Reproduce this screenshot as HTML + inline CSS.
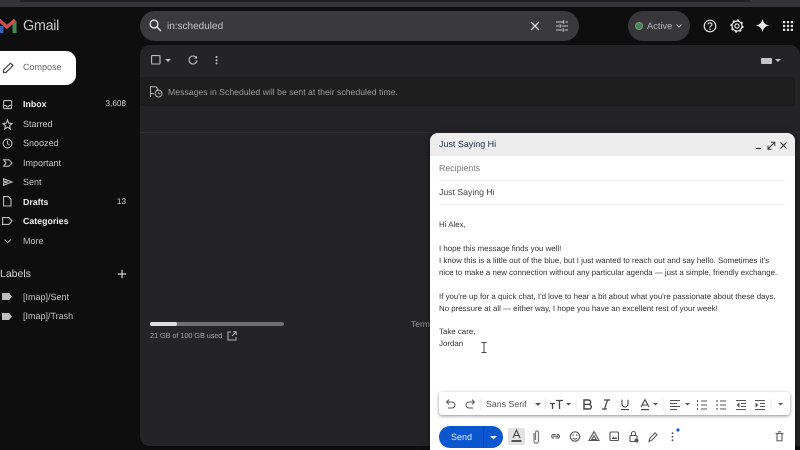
<!DOCTYPE html>
<html><head><meta charset="utf-8"><style>
*{box-sizing:border-box}
html,body{margin:0;padding:0}
body{width:800px;height:450px;overflow:hidden;background:#0e0e0f;position:relative;font-family:"Liberation Sans",sans-serif;text-rendering:geometricPrecision}
#w{position:absolute;left:0;top:0;width:800px;height:450px;filter:blur(.3px)}
.t{position:absolute;white-space:nowrap;line-height:12px;font-size:9.2px}
.a{position:absolute}
svg{position:absolute;overflow:visible;fill:none}
.n{color:#c4c4c6;font-size:9px;left:23px}
.b{color:#f0f0f0;font-weight:bold;font-size:8.8px}
.m{color:#333;font-size:7.9px;left:439px}
.ic{stroke:#bdbdbf;stroke-width:1.1}
.tb{stroke:#555;stroke-width:1}
</style></head><body><div id="w">
<div class="a" style="left:0;top:0;width:800px;height:7px;background:#343437"></div>
<div class="a" style="left:20px;top:0;width:730px;height:2px;background:#202022"></div>

<svg style="left:0;top:19px" width="17" height="14" viewBox="0 0 17 14">
<rect x="0" y="7" width="3.5" height="7" fill="#2f62b8"/>
<rect x="12.5" y="2" width="4" height="12" fill="#3f8a55"/>
<path d="M-1 1L7 8L15 1" stroke="#c9524a" stroke-width="3.4"/>
</svg>
<div class="t" style="left:23px;top:17px;font-size:14.4px;letter-spacing:-.3px;line-height:18px;color:#c9c9cb">Gmail</div>

<div class="a" style="left:-10px;top:51px;width:86px;height:34px;background:#fff;border-radius:10px"></div>
<svg style="left:2px;top:62px" width="12" height="12" viewBox="0 0 12 12"><path d="M1.5 10.5V8L8.5 1.2L11 3.5L4 10.5Z" stroke="#444" stroke-width="1.2"/></svg>
<div class="t" style="left:23px;top:61px;font-size:9px;color:#666">Compose</div>

<!-- sidebar icons -->
<svg style="left:3px;top:100px" width="10" height="10"><rect x=".6" y=".6" width="8" height="8" rx="1" class="ic"/><path d="M.6 5.5H3Q3.5 7 4.6 7T6.3 5.5H8.6" class="ic"/></svg>
<svg style="left:2px;top:119px" width="11" height="11" viewBox="0 0 11 11"><path d="M5.5 1L6.8 4.2L10 4.5L7.6 6.7L8.3 10L5.5 8.2L2.7 10L3.4 6.7L1 4.5L4.2 4.2Z" class="ic"/></svg>
<svg style="left:2px;top:138px" width="11" height="11"><circle cx="5.5" cy="5.5" r="4.4" class="ic"/><path d="M5.5 2.8V5.7L7.4 6.8" class="ic"/></svg>
<svg style="left:3px;top:159px" width="10" height="8"><path d="M.6.8H6L9 4L6 7.2H.6L3 4Z" class="ic"/></svg>
<svg style="left:3px;top:178px" width="10" height="8"><path d="M.6.8L9 4L.6 7.2V4.8L5 4L.6 3.2Z" class="ic"/></svg>
<svg style="left:3px;top:196px" width="9" height="11"><path d="M.6.6H5.4L8 3.2V10H.6Z" class="ic"/></svg>
<svg style="left:2px;top:217px" width="11" height="8"><path d="M.6.6H7L10 4L7 7.4H.6Z" class="ic"/></svg>
<svg style="left:4px;top:239px" width="8" height="5"><path d="M.6.6L3.7 3.6L6.8.6" class="ic"/></svg>
<svg style="left:2px;top:293px" width="10" height="7"><path d="M0 0H7L10 3.5L7 7H0Z" fill="#bdbdbf"/></svg>
<svg style="left:2px;top:313px" width="10" height="7"><path d="M0 0H7L10 3.5L7 7H0Z" fill="#bdbdbf"/></svg>

<div class="t n b" style="top:98px">Inbox</div><div class="t" style="left:100px;width:26px;text-align:right;top:98px;color:#d0d0d0;font-size:8.2px">3,608</div>
<div class="t n" style="top:118px">Starred</div>
<div class="t n" style="top:137px">Snoozed</div>
<div class="t n" style="top:157px">Important</div>
<div class="t n" style="top:176px">Sent</div>
<div class="t n b" style="top:196px">Drafts</div><div class="t" style="left:100px;width:26px;text-align:right;top:196px;color:#d0d0d0;font-size:8.2px">13</div>
<div class="t n b" style="top:215px">Categories</div>
<div class="t n" style="top:235px">More</div>
<div class="t" style="left:0;top:268px;font-size:10.5px;color:#d4d4d4">Labels</div>
<svg style="left:117px;top:269px" width="10" height="10"><path d="M5 .8V9.2M.8 5H9.2" stroke="#d4d4d4" stroke-width="1.2"/></svg>
<div class="t n" style="top:291px">[Imap]/Sent</div>
<div class="t n" style="top:310px">[Imap]/Trash</div>

<!-- search -->
<div class="a" style="left:140px;top:11px;width:439px;height:30px;background:#3a3a3c;border-radius:15px"></div>
<svg style="left:149px;top:19px" width="13" height="13"><circle cx="5" cy="5" r="3.9" stroke="#e0e0e0" stroke-width="1.4"/><path d="M8 8L12 12" stroke="#e0e0e0" stroke-width="1.5"/></svg>
<div class="t" style="left:167px;top:20px;font-size:10px;line-height:13px;color:#c6c6c8">in:scheduled</div>
<svg style="left:530px;top:21px" width="10" height="10"><path d="M1 1L9 9M9 1L1 9" stroke="#dcdcdc" stroke-width="1.3"/></svg>
<svg style="left:556px;top:20px" width="12" height="12"><path d="M0 2H7M9.5 2H12M0 6H3M5.5 6H12M0 10H6M8.5 10H12M7.5.2V3.8M4.2 4.2V7.8M7.2 8.2V11.8" stroke="#c6c6c8" stroke-width="1.1"/></svg>

<!-- status -->
<div class="a" style="left:628px;top:11px;width:62px;height:30px;background:#37373a;border-radius:15px"></div>
<div class="a" style="left:635px;top:22px;width:8px;height:8px;border-radius:50%;background:#3f8a55;border:1px solid #8a8f8a"></div>
<div class="t" style="left:647px;top:20px;font-size:9.3px;color:#b8b8ba">Active</div>
<svg style="left:676px;top:24px" width="6" height="4"><path d="M.5.5L3 3L5.5.5" stroke="#b8b8ba"/></svg>
<svg style="left:703px;top:19px" width="14" height="14"><circle cx="7" cy="7" r="5.8" stroke="#e4e4e4" stroke-width="1.2"/><path d="M5 5.5Q5.2 3.8 7 3.8T9 5.4Q9 6.4 7.9 7T7 8.5" stroke="#e4e4e4" stroke-width="1.1"/><circle cx="7" cy="10.2" r=".8" fill="#e4e4e4"/></svg>
<svg style="left:730px;top:19px" width="14" height="14"><circle cx="7" cy="7" r="2.1" stroke="#e4e4e4" stroke-width="1.2"/><circle cx="7" cy="7" r="5" stroke="#e4e4e4" stroke-width="1.2"/><circle cx="7" cy="7" r="5.9" stroke="#e4e4e4" stroke-width="1.4" stroke-dasharray="2 2.63"/></svg>
<svg style="left:756px;top:19px" width="13" height="13"><path d="M6.5 0Q7.5 5.5 13 6.5Q7.5 7.5 6.5 13Q5.5 7.5 0 6.5Q5.5 5.5 6.5 0Z" fill="#e8e8e8"/></svg>
<svg style="left:783px;top:21px" width="10" height="10"><g fill="#e4e4e4"><rect width="2.2" height="2.2"/><rect x="3.9" width="2.2" height="2.2"/><rect x="7.8" width="2.2" height="2.2"/><rect y="3.9" width="2.2" height="2.2"/><rect x="3.9" y="3.9" width="2.2" height="2.2"/><rect x="7.8" y="3.9" width="2.2" height="2.2"/><rect y="7.8" width="2.2" height="2.2"/><rect x="3.9" y="7.8" width="2.2" height="2.2"/><rect x="7.8" y="7.8" width="2.2" height="2.2"/></g></svg>

<!-- main panel -->
<div class="a" style="left:140px;top:45px;width:660px;height:401px;background:#242426;border-radius:10px 10px 0 10px"></div>
<div class="a" style="left:140px;top:77px;width:655px;height:29px;background:#1e1e1f;border-radius:2px"></div>
<div class="a" style="left:140px;top:132px;width:660px;height:1px;background:#303032"></div>
<svg style="left:151px;top:55px" width="10" height="10"><rect x=".6" y=".6" width="8.4" height="8.4" rx="1" stroke="#bdbdbf" stroke-width="1.1"/></svg>
<svg style="left:165px;top:59px" width="6" height="3"><path d="M0 0H6L3 3Z" fill="#bdbdbf"/></svg>
<svg style="left:188px;top:55px" width="10" height="10"><path d="M8.5 3A4 4 0 1 0 9 5.5" stroke="#bdbdbf" stroke-width="1.1"/><path d="M9 .6V3.6H6Z" fill="#bdbdbf"/></svg>
<svg style="left:215px;top:56px" width="3" height="9"><circle cx="1.5" cy="1" r="1" fill="#c4c4c6"/><circle cx="1.5" cy="4.2" r="1" fill="#c4c4c6"/><circle cx="1.5" cy="7.4" r="1" fill="#c4c4c6"/></svg>
<div class="a" style="left:761px;top:58px;width:11px;height:6px;background:#c4c4c6;border-radius:1px"></div>
<svg style="left:775px;top:59px" width="6" height="3"><path d="M0 0H6L3 3Z" fill="#c4c4c6"/></svg>
<svg style="left:150px;top:86px" width="13" height="12"><path d="M.6 11V.8H6L8 3L6 5" stroke="#b4b4b6" stroke-width="1"/><path d="M.6 7.6H4" stroke="#b4b4b6"/><circle cx="8.6" cy="7.6" r="3.4" stroke="#b4b4b6"/><path d="M8.6 5.8V7.8H10.2" stroke="#b4b4b6" stroke-width=".8"/></svg>
<div class="t" style="left:168px;top:86px;font-size:8.7px;color:#9a9a9c">Messages in Scheduled will be sent at their scheduled time.</div>

<div class="a" style="left:150px;top:322px;width:134px;height:4px;background:#707072;border-radius:2px"></div>
<div class="a" style="left:150px;top:322px;width:27px;height:4px;background:#dedede;border-radius:2px"></div>
<div class="t" style="left:150px;top:330px;font-size:7.4px;letter-spacing:-.1px;color:#a6a6a8">21 GB of 100 GB used</div>
<svg style="left:227px;top:331px" width="10" height="10"><path d="M4 1H1V9H9V6M5 5L9 1M6 .8H9.2V4" stroke="#b4b4b6" stroke-width="1"/></svg>
<div class="t" style="left:411px;top:318px;font-size:8.5px;color:#9a9a9c">Terms</div>

<!-- compose window -->
<div class="a" style="left:430px;top:133px;width:365px;height:317px;background:#fff;border-radius:8px 8px 0 0;box-shadow:0 0 6px rgba(0,0,0,.5);overflow:hidden">
<div class="a" style="left:0;top:0;width:365px;height:23px;background:#ededee"></div>
<div class="a" style="left:9px;top:47px;width:346px;height:1px;background:#eee"></div>
<div class="a" style="left:9px;top:71px;width:346px;height:1px;background:#eee"></div>
</div>
<div class="t" style="left:439px;top:138px;font-size:8.95px;color:#1f2d4a">Just Saying Hi</div>
<svg style="left:756px;top:141px" width="32" height="9"><path d="M0 7.5H5" stroke="#333" stroke-width="1.2"/><path d="M12 8L18 2M15 1.2H18.8V5M12 4.5V8.2H15.5" stroke="#333" stroke-width="1"/><path d="M24.5 1.5L30.5 7.5M30.5 1.5L24.5 7.5" stroke="#333" stroke-width="1.2"/></svg>
<div class="t" style="left:439px;top:162px;font-size:8.8px;color:#777">Recipients</div>
<div class="t" style="left:439px;top:186px;font-size:8.7px;color:#444">Just Saying Hi</div>

<div class="t m" style="top:219px">Hi Alex,</div>
<div class="t m" style="top:243px">I hope this message finds you well!</div>
<div class="t m" style="top:255px">I know this is a little out of the blue, but I just wanted to reach out and say hello. Sometimes it's</div>
<div class="t m" style="top:267px">nice to make a new connection without any particular agenda — just a simple, friendly exchange.</div>
<div class="t m" style="top:291px">If you're up for a quick chat, I'd love to hear a bit about what you're passionate about these days.</div>
<div class="t m" style="top:303px">No pressure at all — either way, I hope you have an excellent rest of your week!</div>
<div class="t m" style="top:326px">Take care,</div>
<div class="t m" style="top:338px">Jordan</div>
<svg style="left:481px;top:342px" width="6" height="11"><path d="M.5.5H5.5M.5 10.5H5.5M3 .5V10.5" stroke="#444"/></svg>

<!-- format bar -->
<div class="a" style="left:439px;top:392px;width:351px;height:23px;background:#fff;border-radius:3px;box-shadow:0 1px 3px rgba(0,0,0,.45)"></div>
<svg style="left:445px;top:399px" width="340" height="11" viewBox="445 399 340 11">
<path d="M447 402H452A3 3 0 0 1 452 408H448M449 399.6L446.6 402L449 404.4" class="tb"/>
<path d="M474 402H469A3 3 0 0 0 469 408H473M472 399.6L474.4 402L472 404.4" class="tb"/>
<path d="M481 399V410M545 399V410M576 399V410M663 399V410M771 399V410" stroke="#e4e4e4" stroke-width=".8"/>
<path d="M535 403H541L538 406Z" fill="#555"/>
<path d="M566 403H571L568.5 405.5Z" fill="#555"/>
<path d="M653 403H658L655.5 405.5Z" fill="#555"/>
<path d="M685 403H690L687.5 405.5Z" fill="#555"/>
<path d="M778 403H783L780.5 405.5Z" fill="#555"/>
<path d="M550 403.5H555M552.5 403.5V409M556 400.5H563M559.5 400.5V409" stroke="#444" stroke-width="1.3"/>
<path d="M584 400H588.5A2.2 2.2 0 0 1 588.5 404.4H584ZM584 404.4H589A2.3 2.3 0 0 1 589 409H584Z" stroke="#444" stroke-width="1.4"/>
<path d="M604 400H610M602 409H607M607.5 400L604.5 409" stroke="#444" stroke-width="1.2"/>
<path d="M622 399.6V404A3 3 0 0 0 628 404V399.6M621 409.6H629" stroke="#444" stroke-width="1.1"/>
<path d="M641 407L645 399.6L649 407M642.4 405H647.6" stroke="#444" stroke-width="1.1"/><path d="M641 409.6H649" stroke="#444" stroke-width="1.2"/>
<path d="M670 400.5H680M670 403.5H677M670 406.5H680M670 409.5H677" class="tb"/>
<path d="M701 401H707M701 405H707M701 409H707" class="tb"/><path d="M697.5 400V402M697.5 404V406M697.5 408V410" stroke="#555"/>
<path d="M720 401H726M720 405H726M720 409H726" class="tb"/><circle cx="717" cy="401" r=".9" fill="#555"/><circle cx="717" cy="405" r=".9" fill="#555"/><circle cx="717" cy="409" r=".9" fill="#555"/>
<path d="M736 400.5H746M741 403.5H746M741 406.5H746M736 409.5H746" class="tb"/><path d="M739.5 402.5L736.5 405L739.5 407.5Z" fill="#555"/>
<path d="M755 400.5H765M760 403.5H765M760 406.5H765M755 409.5H765" class="tb"/><path d="M755.5 402.5L758.5 405L755.5 407.5Z" fill="#555"/>
</svg>
<div class="t" style="left:486px;top:398px;font-size:8.8px;color:#555">Sans Serif</div>

<!-- send -->
<div class="a" style="left:439px;top:426px;width:64px;height:22px;background:#0b57d0;border-radius:11px"></div>
<div class="a" style="left:483px;top:426px;width:1px;height:22px;background:#0a47a8"></div>
<div class="t" style="left:451px;top:431px;font-size:9px;color:#dfe8fa">Send</div>
<svg style="left:490px;top:436px" width="7" height="4"><path d="M0 0H7L3.5 3.5Z" fill="#e8eefc"/></svg>
<div class="a" style="left:508px;top:428px;width:17px;height:17px;background:#e2e2e2;border-radius:2px"></div>
<svg style="left:430px;top:426px" width="370" height="24" viewBox="430 426 370 24">
<path d="M513 438L516.5 430L520 438M514.2 435.5H518.8" stroke="#444" stroke-width="1.1"/><path d="M511.5 441H521.5" stroke="#333" stroke-width="1.6"/>
<path d="M534 433V441A2.2 2.2 0 0 0 538.5 441V432.5A1.5 1.5 0 0 0 535.5 432.5V440" stroke="#777" stroke-width="1.2"/>
<path d="M554 437H552.5A2.3 2.3 0 0 1 552.5 433.5H555.5M557 433.5H558.5A2.3 2.3 0 0 1 558.5 437H555.5M553 435.2H558" transform="translate(0 1)" stroke="#555" stroke-width="1.1"/>
<circle cx="575" cy="436.5" r="4.7" stroke="#555" stroke-width="1.1"/><circle cx="573.2" cy="435" r=".8" fill="#555"/><circle cx="576.8" cy="435" r=".8" fill="#555"/><path d="M572.8 438Q575 440.2 577.2 438" stroke="#555"/>
<path d="M594 431.5L599 440.5H589ZM594 435.5L596.2 439.5H591.8Z" stroke="#555" stroke-width="1.1"/>
<rect x="610" y="432" width="8.5" height="8.5" rx="1" stroke="#555" stroke-width="1.1"/><path d="M611.5 439L613.5 436.5L615 438L616 437L617.5 439Z" fill="#555"/>
<rect x="630" y="435.5" width="7" height="6" rx="1" stroke="#555" stroke-width="1.1"/><path d="M631.5 435.5V433.5A2 2 0 0 1 635.5 433.5V435.5" stroke="#555"/><circle cx="636.5" cy="440.5" r="2" fill="#555"/>
<path d="M649 441.5L650 438L655 432.8L657 434.8L652 440Z" stroke="#666" stroke-width="1.2"/>
<circle cx="672.5" cy="433.2" r=".9" fill="#444"/><circle cx="672.5" cy="436.8" r=".9" fill="#444"/><circle cx="672.5" cy="440.2" r=".9" fill="#444"/>
<circle cx="678" cy="430" r="1.6" fill="#1a57c8"/>
<path d="M775.5 433.5H783.5M777 433.5V440.8H782V433.5M778 431.8H781" stroke="#666" stroke-width="1.2"/>
</svg>
</div></body></html>
